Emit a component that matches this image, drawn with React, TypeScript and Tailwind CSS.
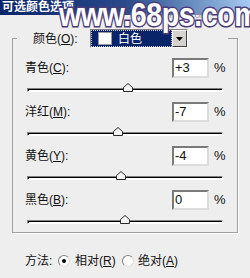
import React from 'react';

type Channel = { name: string; key: string; value: number };

const channels: Channel[] = [
    { name: '青色', key: 'C', value: 3 },
    { name: '洋红', key: 'M', value: -7 },
    { name: '黄色', key: 'Y', value: -4 },
    { name: '黑色', key: 'B', value: 0 },
];

const Thumb: React.FC<{ value: number }> = ({ value }) => {
    // track is 196px wide, 0 sits in the middle
    const center = 98 + value * 0.98;
    return (
        <svg
            width="10"
            height="9"
            viewBox="0 0 10 9"
            className="absolute top-[5px]"
            style={{ left: center - 5 }}
        >
            <polygon points="0.5,4.5 5,0.5 9.5,4.5 9.5,8.5 0.5,8.5" fill="#f4f4f4" stroke="#2a2a2a" strokeWidth="1" />
        </svg>
    );
};

const Radio: React.FC<{ checked?: boolean }> = ({ checked }) => (
    <div className="w-[12px] h-[12px] rounded-full bg-white border border-t-[#808080] border-l-[#808080] border-b-[#e0e0e0] border-r-[#e0e0e0] flex items-center justify-center">
        {checked && <div className="w-[4px] h-[4px] rounded-full bg-black" />}
    </div>
);

const App: React.FC = () => {
    return (
        <div className="relative w-[250px] h-[278px] overflow-hidden bg-[#eeeeee] text-[12px] text-[#111] font-['Liberation_Sans','Noto_Sans_CJK_SC',sans-serif]">
            <div className="h-[15px] bg-gradient-to-r from-[#0a246a] via-[#2a4a8a] to-[#a6caf0] pl-[2px] text-white font-bold text-[12px] leading-[15px]">
                可选颜色选项
            </div>

            {/* watermark */}
            <div className="absolute left-[80px] top-[12px] text-[7px] leading-[8px] text-[#8a8a9a] whitespace-nowrap">
                思缘设计论坛&nbsp;&nbsp;&nbsp;&nbsp;WWW.MISSYUAN.COM
            </div>
            <div className="absolute left-[59px] top-[-3px] text-[34px] leading-[34px] font-bold text-white whitespace-nowrap origin-left scale-x-[0.84] [-webkit-text-stroke:3px_#4b3b78] [paint-order:stroke_fill] tracking-[-0.5px]">
                www.68ps.com
            </div>

            <fieldset className="mx-[12px] mt-[14px] w-[226px] border border-[#a0a0a0] px-[4px] shadow-[1px_1px_0_#ffffff]">
                <legend className="flex items-center h-[19px] pl-[16px] pr-[40px]">
                    <span className="w-[57px]">
                        颜色(<span className="underline">O</span>):
                    </span>
                    <div className="flex w-[98px] h-[19px] border border-t-[#808080] border-l-[#808080] border-b-white border-r-white">
                        <div className="flex-1 bg-[#0a246a] border border-dotted border-[#c8c8c8] flex items-center pl-[6px] gap-[6px]">
                            <div className="w-[14px] h-[13px] bg-white border border-[#9a9a9a]" />
                            <span className="text-white">白色</span>
                        </div>
                        <div className="w-[15px] bg-[#d6d3ce] border border-t-white border-l-white border-b-[#404040] border-r-[#404040] flex items-center justify-center">
                            <svg width="7" height="4" viewBox="0 0 7 4">
                                <polygon points="0,0 7,0 3.5,4" fill="#000" />
                            </svg>
                        </div>
                    </div>
                </legend>

                <div className="pl-[8px] pt-[10px] flex flex-col gap-[2px]">
                    {channels.map(c => (
                        <div key={c.key} className="flex flex-col">
                            <div className="flex items-center h-[20px]">
                                <span className="w-[147px]">
                                    {c.name}(<span className="underline">{c.key}</span>):
                                </span>
                                <div className="w-[37px] h-[20px] bg-white border-2 border-t-[#7a7a7a] border-l-[#7a7a7a] border-b-[#dcdcdc] border-r-[#dcdcdc] text-[13px] leading-[16px] pl-[1px]">
                                    {c.value > 0 ? `+${c.value}` : `${c.value}`}
                                </div>
                                <span className="ml-[5px] text-[13px]">%</span>
                            </div>
                            <div className="relative h-[22px] w-[196px] ml-[2px]">
                                <div className="mt-[10px] h-[4px] border border-t-[#808080] border-l-[#808080] border-b-white border-r-white">
                                    <div className="h-[2px] bg-white border-t border-l border-black" />
                                </div>
                                <Thumb value={c.value} />
                            </div>
                        </div>
                    ))}
                </div>
            </fieldset>

            <div className="flex items-center h-[20px] mt-[18px] pl-[25px]">
                <span className="w-[33px]">方法:</span>
                <Radio checked />
                <span className="ml-[5px] w-[47px]">
                    相对(<span className="underline">R</span>)
                </span>
                <Radio />
                <span className="ml-[4px]">
                    绝对(<span className="underline">A</span>)
                </span>
            </div>
        </div>
    );
};

export default App;
